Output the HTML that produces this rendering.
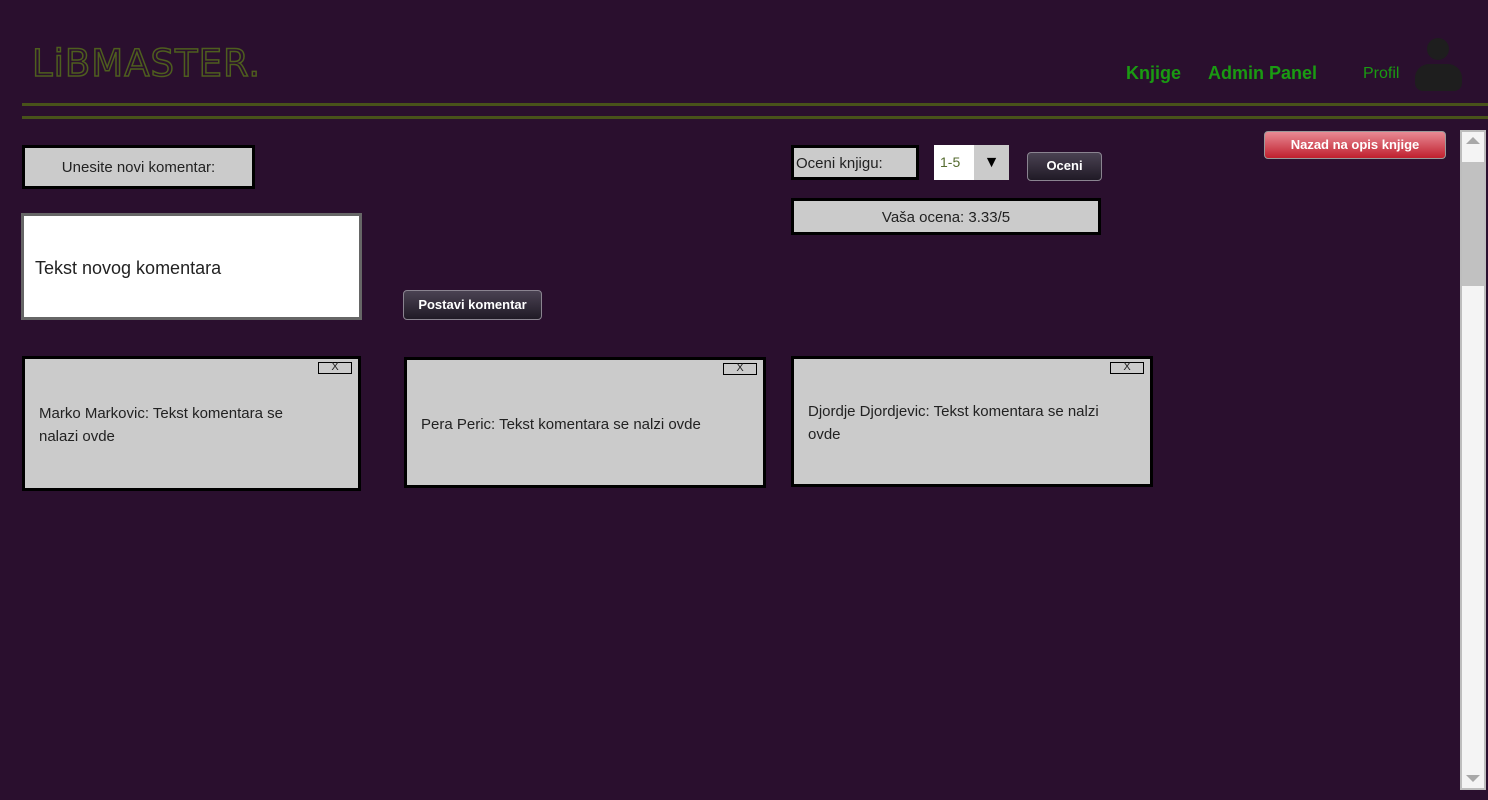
<!DOCTYPE html>
<html><head><meta charset="utf-8"><style>
*{box-sizing:border-box;margin:0;padding:0}
body{width:1488px;height:800px;background:#2a0f2e;font-family:"Liberation Sans",sans-serif;position:relative;overflow:hidden;color:#222}
.abs{position:absolute}
.logo{left:32px;top:42px;font-size:37px;letter-spacing:1px;color:transparent;-webkit-text-stroke:1.5px #4e5e1e;font-family:"DejaVu Sans",sans-serif;font-weight:normal}
.line{left:22px;right:0;height:3px;background:#48521a}
.nav{color:#1a9a12;font-weight:bold;font-size:18px}
.gbox{background:#cbcbcb;border:3px solid #000}
.btn{background:linear-gradient(#4a4252,#201a26);border:1px solid #8a8490;border-radius:4px;color:#fff;font-weight:bold;font-size:13px;text-align:center}
.card{background:#cbcbcb;border:3px solid #000;font-size:15px;color:#222;line-height:23px;padding-left:14px}
.x{position:absolute;top:3px;right:6px;width:34px;height:12px;border:1.5px solid #000;font-size:11px;line-height:9px;text-align:center}
</style></head><body>
<div class="abs logo">LiBMASTER.</div>
<div class="abs line" style="top:103px"></div>
<div class="abs line" style="top:116px"></div>
<div class="abs nav" style="left:1126px;top:63px">Knjige</div>
<div class="abs nav" style="left:1208px;top:63px">Admin Panel</div>
<div class="abs" style="left:1363px;top:65px;color:#1a9a12;font-size:16px">Profil</div>
<div class="abs" style="left:1427px;top:38px;width:22px;height:22px;border-radius:50%;background:#1e1e1e"></div>
<div class="abs" style="left:1415px;top:64px;width:47px;height:27px;border-radius:14px 14px 8px 8px;background:#1e1e1e"></div>

<div class="abs btn" style="left:1264px;top:131px;width:182px;height:28px;line-height:26px;background:linear-gradient(#e88a94,#c0202e);border-color:#999">Nazad na opis knjige</div>

<div class="abs" style="left:1460px;top:130px;width:26px;height:660px;background:#f4f4f4;border:2px solid #bdbdbd"></div>
<div class="abs" style="left:1462px;top:162px;width:22px;height:124px;background:#c1c1c1"></div>
<div class="abs" style="left:1466px;top:137px;width:0;height:0;border-left:7px solid transparent;border-right:7px solid transparent;border-bottom:7px solid #a8a8a8"></div>
<div class="abs" style="left:1466px;top:775px;width:0;height:0;border-left:7px solid transparent;border-right:7px solid transparent;border-top:7px solid #a8a8a8"></div>

<div class="abs gbox" style="left:22px;top:145px;width:233px;height:44px;text-align:center;line-height:40px;font-size:15px">Unesite novi komentar:</div>
<div class="abs" style="left:21px;top:213px;width:341px;height:107px;background:#fff;border:3px solid #666;font-size:18px;padding:42px 0 0 11px;color:#222">Tekst novog komentara</div>
<div class="abs btn" style="left:403px;top:290px;width:139px;height:30px;line-height:27px">Postavi komentar</div>

<div class="abs gbox" style="left:791px;top:145px;width:128px;height:35px;font-size:15px;line-height:31px;padding-left:2px">Oceni knjigu:</div>
<div class="abs" style="left:934px;top:145px;width:40px;height:35px;background:#fff;color:#556b2f;font-size:14px;line-height:35px;padding-left:6px">1-5</div>
<div class="abs" style="left:974px;top:145px;width:35px;height:35px;background:#cbcbcb;text-align:center;line-height:35px;font-size:16px;color:#000">▼</div>
<div class="abs btn" style="left:1027px;top:152px;width:75px;height:29px;line-height:26px">Oceni</div>
<div class="abs gbox" style="left:791px;top:198px;width:310px;height:37px;text-align:center;line-height:33px;font-size:15px">Vaša ocena: 3.33/5</div>

<div class="abs card" style="left:22px;top:356px;width:339px;height:135px;padding-top:43px"><div class="x">X</div>Marko Markovic: Tekst komentara se<br>nalazi ovde</div>
<div class="abs card" style="left:404px;top:357px;width:362px;height:131px;padding-top:53px"><div class="x">X</div>Pera Peric: Tekst komentara se nalzi ovde</div>
<div class="abs card" style="left:791px;top:356px;width:362px;height:131px;padding-top:41px"><div class="x">X</div>Djordje Djordjevic: Tekst komentara se nalzi<br>ovde</div>
</body></html>
